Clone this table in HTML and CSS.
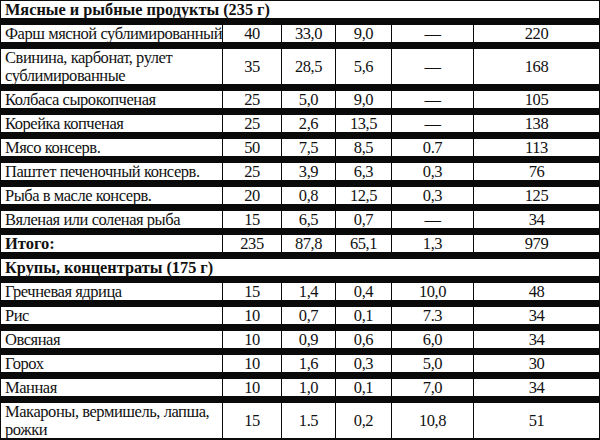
FILE: index.html
```html
<!DOCTYPE html>
<html lang="ru">
<head>
<meta charset="utf-8">
<link rel="stylesheet" href="styles.css">
</head>
<body>
<div class="table">
  <div class="cell head">Мясные и рыбные продукты (235 г)</div>

  <div class="cell name">Фарш мясной сублимированный</div><div class="cell">40</div><div class="cell">33,0</div><div class="cell">9,0</div><div class="cell">—</div><div class="cell">220</div>
  <div class="cell name two">Свинина, карбонат, рулет<br>сублимированные</div><div class="cell">35</div><div class="cell">28,5</div><div class="cell">5,6</div><div class="cell">—</div><div class="cell">168</div>
  <div class="cell name">Колбаса сырокопченая</div><div class="cell">25</div><div class="cell">5,0</div><div class="cell">9,0</div><div class="cell">—</div><div class="cell">105</div>
  <div class="cell name">Корейка копченая</div><div class="cell">25</div><div class="cell">2,6</div><div class="cell">13,5</div><div class="cell">—</div><div class="cell">138</div>
  <div class="cell name">Мясо консерв.</div><div class="cell">50</div><div class="cell">7,5</div><div class="cell">8,5</div><div class="cell">0.7</div><div class="cell">113</div>
  <div class="cell name">Паштет печеночный консерв.</div><div class="cell">25</div><div class="cell">3,9</div><div class="cell">6,3</div><div class="cell">0,3</div><div class="cell">76</div>
  <div class="cell name">Рыба в масле консерв.</div><div class="cell">20</div><div class="cell">0,8</div><div class="cell">12,5</div><div class="cell">0,3</div><div class="cell">125</div>
  <div class="cell name">Вяленая или соленая рыба</div><div class="cell">15</div><div class="cell">6,5</div><div class="cell">0,7</div><div class="cell">—</div><div class="cell">34</div>
  <div class="cell name bold">Итого:</div><div class="cell">235</div><div class="cell">87,8</div><div class="cell">65,1</div><div class="cell">1,3</div><div class="cell">979</div>

  <div class="cell head">Крупы, концентраты (175 г)</div>

  <div class="cell name">Гречневая ядрица</div><div class="cell">15</div><div class="cell">1,4</div><div class="cell">0,4</div><div class="cell">10,0</div><div class="cell">48</div>
  <div class="cell name">Рис</div><div class="cell">10</div><div class="cell">0,7</div><div class="cell">0,1</div><div class="cell">7.3</div><div class="cell">34</div>
  <div class="cell name">Овсяная</div><div class="cell">10</div><div class="cell">0,9</div><div class="cell">0,6</div><div class="cell">6,0</div><div class="cell">34</div>
  <div class="cell name">Горох</div><div class="cell">10</div><div class="cell">1,6</div><div class="cell">0,3</div><div class="cell">5,0</div><div class="cell">30</div>
  <div class="cell name">Манная</div><div class="cell">10</div><div class="cell">1,0</div><div class="cell">0,1</div><div class="cell">7,0</div><div class="cell">34</div>
  <div class="cell name two">Макароны, вермишель, лапша,<br>рожки</div><div class="cell">15</div><div class="cell">1.5</div><div class="cell">0,2</div><div class="cell">10,8</div><div class="cell">51</div>
</div>
</body>
</html>
```

FILE: styles.css
```css
html, body {
  margin: 0;
  padding: 0;
  background: #ffffff;
}

body {
  width: 600px;
  height: 440px;
  overflow: hidden;
}

.table {
  display: grid;
  grid-template-columns: 221px 58px 53px 55px 81px 125px;
  column-gap: 1px;
  row-gap: 7px;
  padding: 1px 1px 2px 1px;
  background: #0a0a0a;
  font-family: "Liberation Serif", "Times New Roman", serif;
  font-size: 16.5px;
  letter-spacing: -0.45px;
  color: #111111;
}

.cell {
  background: #ffffff;
  min-height: 17px;
  line-height: 17px;
  display: flex;
  align-items: center;
  justify-content: center;
  white-space: nowrap;
}

.cell.name {
  justify-content: flex-start;
  padding-left: 4px;
}

.cell.two {
  line-height: 17.5px;
  min-height: 35px;
}

.cell.head {
  grid-column: 1 / -1;
  justify-content: flex-start;
  padding-left: 4px;
  font-size: 16.3px;
  letter-spacing: 0;
  font-weight: bold;
}

.cell.bold {
  font-weight: bold;
  letter-spacing: 0;
}
```
